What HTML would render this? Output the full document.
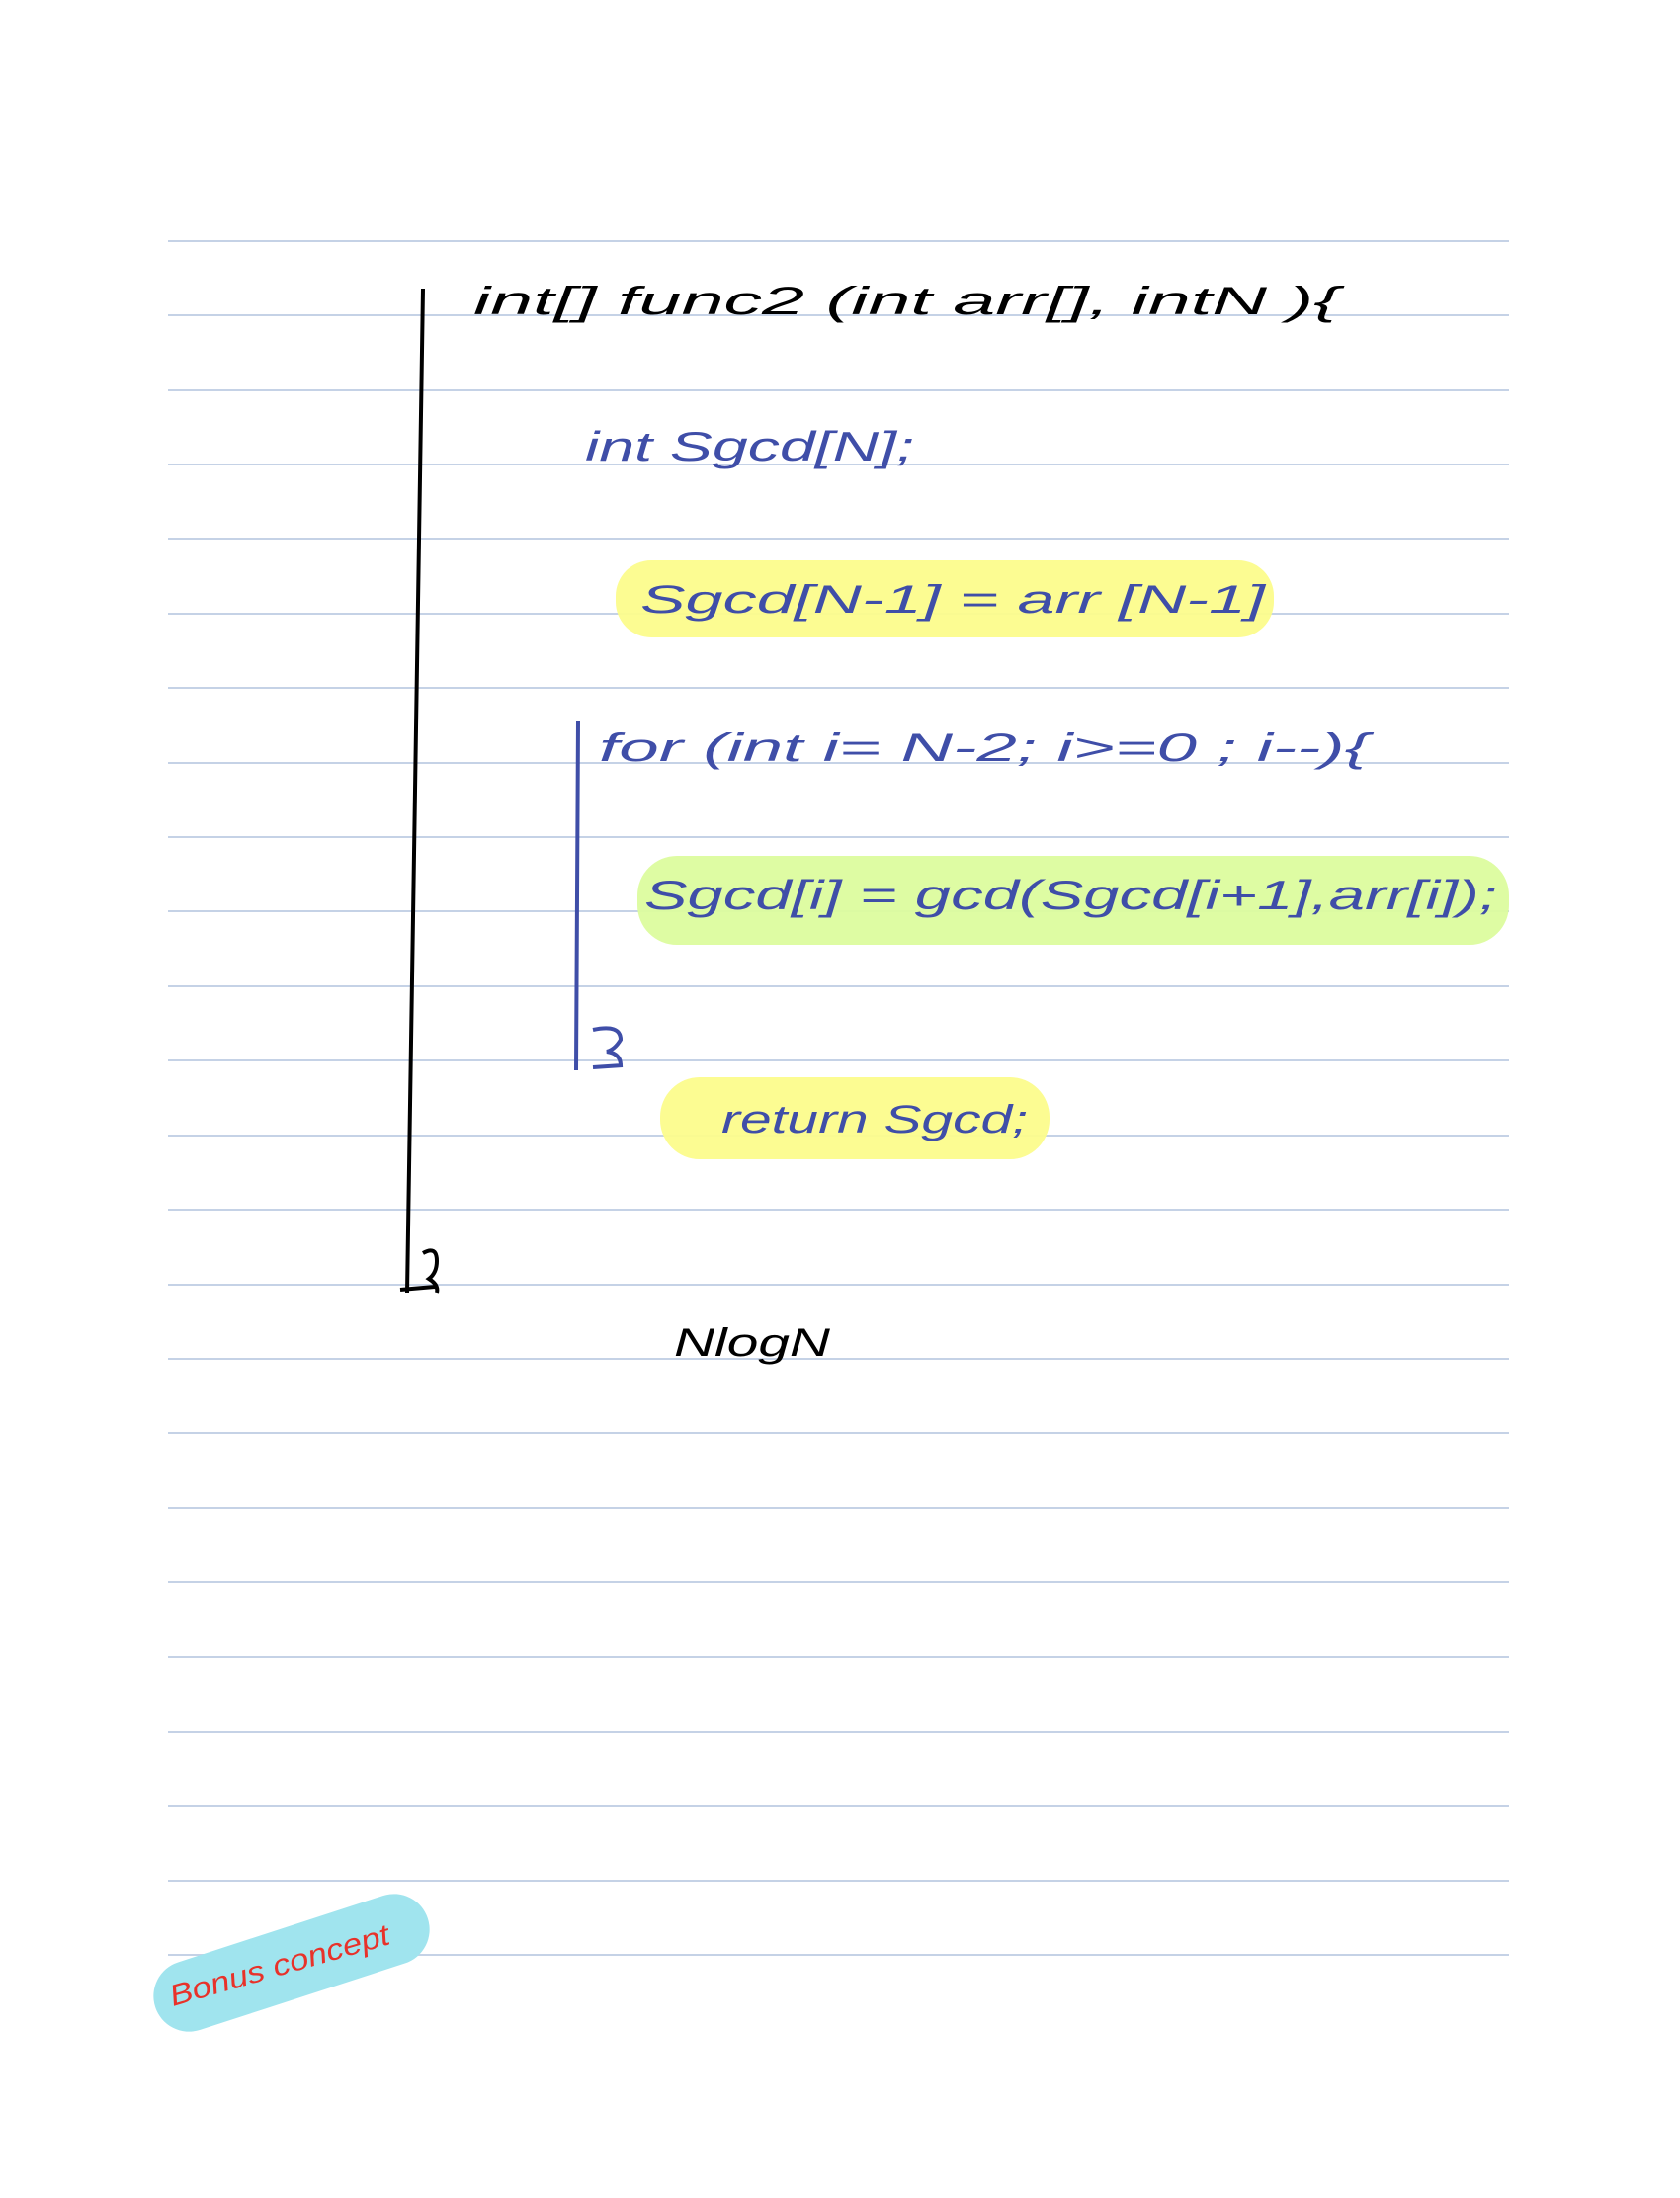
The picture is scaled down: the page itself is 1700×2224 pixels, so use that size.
<!DOCTYPE html>
<html><head><meta charset="utf-8"><style>
html,body{margin:0;padding:0;background:#fff;}
svg{display:block}
text{font-family:"Liberation Sans",sans-serif;font-style:italic}
</style></head><body>
<svg width="1700" height="2224" viewBox="0 0 1700 2224" xmlns="http://www.w3.org/2000/svg">
<g stroke="#c5d2e6" stroke-width="2">
<line x1="170" x2="1527" y1="244" y2="244"/>
<line x1="170" x2="1527" y1="319" y2="319"/>
<line x1="170" x2="1527" y1="395" y2="395"/>
<line x1="170" x2="1527" y1="470" y2="470"/>
<line x1="170" x2="1527" y1="545" y2="545"/>
<line x1="170" x2="1527" y1="621" y2="621"/>
<line x1="170" x2="1527" y1="696" y2="696"/>
<line x1="170" x2="1527" y1="772" y2="772"/>
<line x1="170" x2="1527" y1="847" y2="847"/>
<line x1="170" x2="1527" y1="922" y2="922"/>
<line x1="170" x2="1527" y1="998" y2="998"/>
<line x1="170" x2="1527" y1="1073" y2="1073"/>
<line x1="170" x2="1527" y1="1149" y2="1149"/>
<line x1="170" x2="1527" y1="1224" y2="1224"/>
<line x1="170" x2="1527" y1="1300" y2="1300"/>
<line x1="170" x2="1527" y1="1375" y2="1375"/>
<line x1="170" x2="1527" y1="1450" y2="1450"/>
<line x1="170" x2="1527" y1="1526" y2="1526"/>
<line x1="170" x2="1527" y1="1601" y2="1601"/>
<line x1="170" x2="1527" y1="1677" y2="1677"/>
<line x1="170" x2="1527" y1="1752" y2="1752"/>
<line x1="170" x2="1527" y1="1827" y2="1827"/>
<line x1="170" x2="1527" y1="1903" y2="1903"/>
<line x1="170" x2="1527" y1="1978" y2="1978"/>
</g>
<!-- highlights -->
<rect x="623" y="567" width="666" height="78" rx="36" fill="#fcfc8c" opacity="0.95"/>
<rect x="645" y="866" width="882" height="90" rx="40" fill="#dcfc9e" opacity="0.95"/>
<rect x="668" y="1090" width="394" height="83" rx="40" fill="#fcfc8c" opacity="0.95"/>
<rect x="150" y="1950" width="290" height="72" rx="36" fill="#a0e4ee" transform="rotate(-18 295 1986)"/>
<!-- black brace lines -->
<path d="M428 292 L412 1308 M405 1305 L440 1302 M428 1268 q14 -8 14 8 q0 12 -8 18 q10 6 8 14" stroke="#000" stroke-width="4" fill="none"/>
<path d="M585 730 L583 1083 M600 1080 L630 1078 M600 1042 q28 -6 28 10 q-6 10 -14 12 q14 2 14 14" stroke="#3f4ea8" stroke-width="4" fill="none"/>
<!-- text -->
<text x="479" y="318" font-size="40" fill="#000" textLength="876" lengthAdjust="spacingAndGlyphs">int[]   func2  (int  arr[],  intN ){</text>
<g fill="#3f4ea8">
<text x="592" y="466" font-size="42" textLength="333" lengthAdjust="spacingAndGlyphs">int  Sgcd[N];</text>
<text x="648" y="620" font-size="40" textLength="632" lengthAdjust="spacingAndGlyphs">Sgcd[N-1] =    arr [N-1]</text>
<text x="606" y="770" font-size="40" textLength="779" lengthAdjust="spacingAndGlyphs">for (int  i= N-2;  i>=0 ; i--){</text>
<text x="652" y="920" font-size="42" textLength="863" lengthAdjust="spacingAndGlyphs">Sgcd[i]  =  gcd(Sgcd[i+1],arr[i]);</text>
<text x="730" y="1146" font-size="40" textLength="310" lengthAdjust="spacingAndGlyphs">return  Sgcd;</text>
</g>
<text x="682" y="1372" font-size="40" fill="#000" textLength="158" lengthAdjust="spacingAndGlyphs">NlogN</text>
<text x="175" y="2030" font-size="30" fill="#e8322a" transform="rotate(-16 175 2030)" textLength="230" lengthAdjust="spacingAndGlyphs">Bonus  concept</text>
</svg>
</body></html>
